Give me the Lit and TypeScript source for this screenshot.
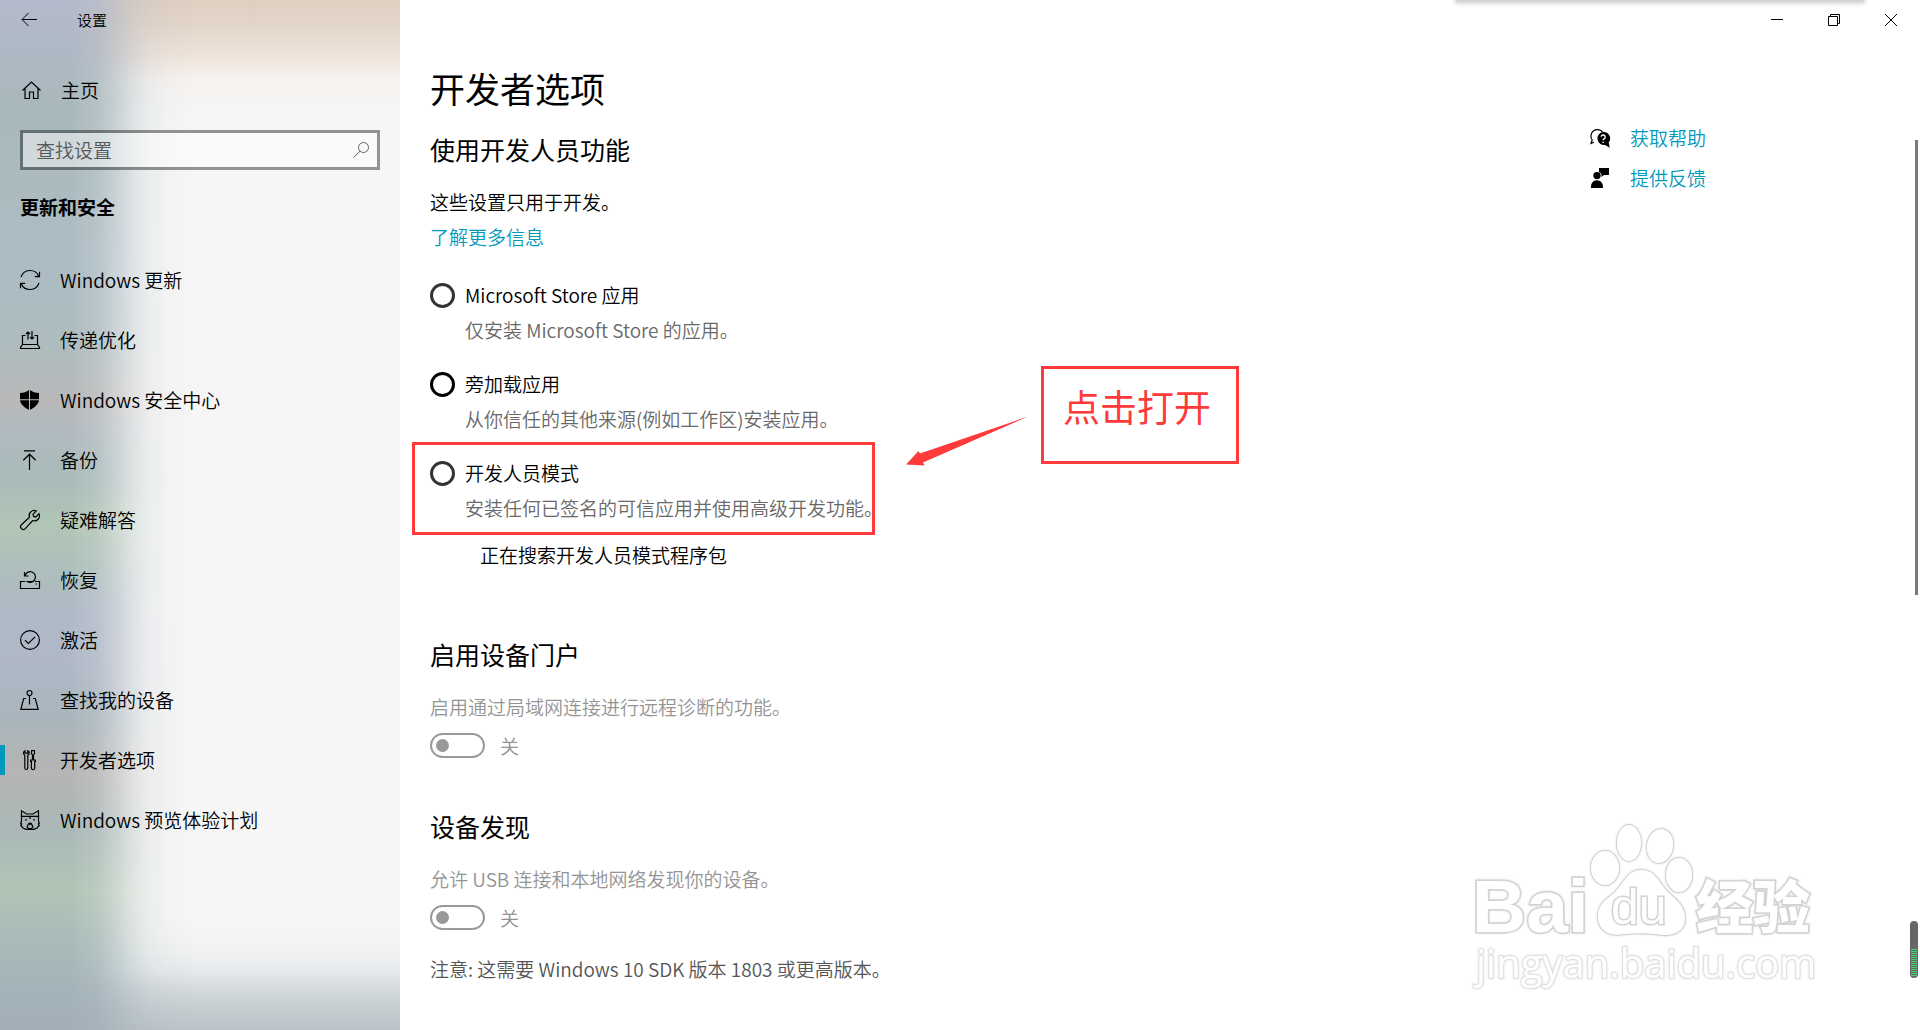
import { LitElement, html, svg, css, nothing } from "lit";
import { customElement, property, state } from "lit/decorators.js";
import { classMap } from "lit/directives/class-map.js";

const icons: Record<string, unknown> = {
  back: svg`<path d="M17 9.500H2M8.500 3 2 9.500l6.500 6.500"/>`,
  home: svg`<path d="M1.500 10.500 10.500 2l9 8.500M4 8.500V18.500h4.500v-6.500h4v6.500h4.500V8.500"/>`,
  search: svg`<circle cx="11.500" cy="7.500" r="5"/><path d="M8 11.200 1.500 17.500"/>`,
  sync: svg`<path d="M1 7.200A9.400 9.400 0 0 1 18.700 6.300M19.500 1.800V6.600H14.800M19 12.800A9.400 9.400 0 0 1 1.300 13.700M.5 18.200V13.400H5.200"/>`,
  delivery: svg`<path d="M5.500 5.500H2.500V14.500M14.500 5.500H17.500V14.500M2.500 14.500h15l2 3v1H.5v-1zM8 9.500V2M6 4l2-2 2 2M12 1v8M10 7l2 2 2-2"/>`,
  shield: svg`<path class="fill" d="M9 0V9.200H0V3C3.500 3 6.500 2 9 0ZM10 0c2.500 2 5.500 3 9 3V9.200H10ZM0 10.300H9V19.800C4.500 17.800.6 14.500 0 10.300ZM10 10.300h9c-.6 4.200-4.500 7.500-9 9.500Z"/>`,
  backup: svg`<path d="M4 .8H15M9.500 20V4.500M3.300 10.300 9.500 4.200l6.200 6.100"/>`,
  wrench: svg`<path d="M16.300 1A5 5 0 0 0 9.500 7.300L1.400 14.700a2.700 2.700 0 0 0 3.900 3.900L12.700 10.500A5 5 0 0 0 19 3.700L15.800 7 13.600 6.400 13 4.300Z"/>`,
  recovery: svg`<path d="M5 11.500H.5v7h19v-7H15M4.500 2v4H8.500M5 5.800A5.300 5.300 0 1 1 7.300 11.500H13M15.500 14h1.500"/>`,
  check: svg`<circle cx="10" cy="10" r="9.400"/><path d="m5 10.200 3.400 3.300 6.700-6.700"/>`,
  locate: svg`<circle cx="9.500" cy="3" r="2.500"/><path d="M9.500 5.500V14.500M6 8.500H3.700L.8 19.400H18.200L15.300 8.500H13"/>`,
  tools: svg`<path d="M5 .7A2.500 2.500 0 0 0 4.800 5.200V18a1.500 1.500 0 0 0 3 0V5.200A2.500 2.500 0 0 0 7.800.7V3.200H5ZM11.500.6h3V3.500l-1 1.500V10h-1V5l-1-1.500ZM10.600 10h4.800v1.500h-.7V18a1.600 1.600 0 0 1-3.300 0v-6.500h-.8Z"/>`,
  insider: svg`<path d="M1.500 6V.8L6.500 4h6.500l5.500-3.200V6M.8 6.300H19.200M1.500 6V11L.7 13l1 1-1 1.500 2.300 2.500 3 1.400h8l3-1.400 2.300-2.500-1-1.500 1-1L18.500 11V6M10 6.500V9M7 17l1.500-3 1.500-1 1.500 1L13 17l-1.500 1.500h-3ZM6 8.800v2M14 8.800v2"/><path class="fill" d="M8 13h4l-2 2.500Z"/>`,
  help: svg`<path d="M4 14.200 1 15.500 2.200 12A6.500 6.500 0 1 1 12.700 4.200"/><path class="fill" d="M13 4A6.500 6.500 0 0 1 18.700 14.500L19.800 19.800 15 17A6.500 6.500 0 1 1 13 4Z"/><path class="cut" d="M11.200 8.800a2 2 0 1 1 2.800 2c-.7.400-.9.700-.9 1.500M13.100 13.700v1.300"/>`,
  feedback: svg`<path class="fill" d="M9 0H19V7H14L11.500 9V6.500A4.200 4.200 0 0 0 9 4ZM7 3.900a3.700 3.700 0 1 1 0 7.400 3.700 3.700 0 0 1 0-7.400ZM1 20C.7 15.500 3 12.300 7 12.300s6.300 3.200 6 7.700Z"/>`,
  minimize: svg`<path d="M4 9.500H16"/>`,
  restore: svg`<path d="M4.500 6.500h9v9h-9zM6.500 6.500v-2h9v9h-2"/>`,
  close: svg`<path d="m4 4 12 12M16 4 4 16"/>`,
};

@customElement("ui-icon")
export class UiIcon extends LitElement {
  @property() name = "";
  @property({ type: Boolean, reflect: true }) thin = false;

  static styles = css`
    :host { display: block; flex: none; width: 20px; height: 20px; }
    svg { display: block; width: 20px; height: 20px; overflow: visible; fill: none; stroke: currentColor; stroke-width: 1.200; }
    :host([thin]) svg { stroke-width: 1; }
    .fill { fill: currentColor; stroke: none; }
    .cut { stroke: #fff; stroke-width: 1.400; }
  `;

  render() {
    return html`<svg viewBox="0 0 20 20" aria-hidden="true">${icons[this.name] ?? nothing}</svg>`;
  }
}

@customElement("toggle-switch")
export class ToggleSwitch extends LitElement {
  @property() label = "";

  static styles = css`
    :host { display: block; }
    .row { display: flex; align-items: center; gap: 15px; height: 25px; color: #949494; }
    .switch { appearance: none; display: flex; align-items: center; box-sizing: border-box; width: 55px; height: 25px; margin: 0; padding: 0 4px; border: 2px solid #999; border-radius: 13px; }
    .switch::before { content: ""; width: 13px; height: 13px; border-radius: 50%; background: #999; }
  `;

  render() {
    return html`<label class="row"><input class="switch" type="checkbox" role="switch" aria-label=${this.label} disabled />关</label>`;
  }
}

@customElement("site-watermark")
export class SiteWatermark extends LitElement {
  static styles = css`
    :host { display: block; width: 360px; height: 180px; pointer-events: none; }
    svg { display: block; overflow: visible; fill: #fff; stroke: #d2d2d2; stroke-width: 2; paint-order: stroke; filter: drop-shadow(0 0 1px #ddd); }
    .brand { font: 700 75px "Liberation Sans", Arial, sans-serif; stroke-width: 3; }
    .du { font: 400 50px "Liberation Sans", Arial, sans-serif; stroke-width: 3; }
    .cjk { font: 900 57px "Noto Sans CJK SC", sans-serif; stroke-width: 3; }
    .site { font: 400 40px "Open Sans", sans-serif; stroke: #e0e0e0; }
  `;

  render() {
    return html`<svg width="360" height="180" viewBox="0 0 360 180">
      <text class="brand" x="-3" y="107">Bai</text>
      <ellipse cx="130" cy="43" rx="14" ry="17"/>
      <ellipse cx="154" cy="18" rx="12" ry="18"/>
      <ellipse cx="185" cy="21" rx="13" ry="17" transform="rotate(10 185 21)"/>
      <ellipse cx="204" cy="50" rx="13" ry="17"/>
      <path d="M166 45C179 45 183 55 190 64C198 73 210 79 210 93C210 106 199 111 188 110C175 108 161 108 149 109C133 112 123 105 123 91C123 78 133 74 141 66C149 57 153 45 166 45Z"/>
      <text class="du" x="136" y="99">du</text>
      <text class="cjk" x="221" y="103">经验</text>
      <text class="site" x="1" y="153">jingyan.baidu.com</text>
    </svg>`;
  }
}

interface NavItem { icon: string; text: string; current?: boolean }
interface Option { id: string; text: string; hint: string }

@customElement("app-root")
export class AppRoot extends LitElement {
  @state() private selected = "";

  private nav: NavItem[] = [
    { icon: "sync", text: "Windows 更新" },
    { icon: "delivery", text: "传递优化" },
    { icon: "shield", text: "Windows 安全中心" },
    { icon: "backup", text: "备份" },
    { icon: "wrench", text: "疑难解答" },
    { icon: "recovery", text: "恢复" },
    { icon: "check", text: "激活" },
    { icon: "locate", text: "查找我的设备" },
    { icon: "tools", text: "开发者选项", current: true },
    { icon: "insider", text: "Windows 预览体验计划" },
  ];

  private options: Option[] = [
    { id: "store", text: "Microsoft Store 应用", hint: "仅安装 Microsoft Store 的应用。" },
    { id: "sideload", text: "旁加载应用", hint: "从你信任的其他来源(例如工作区)安装应用。" },
    { id: "developer", text: "开发人员模式", hint: "安装任何已签名的可信应用并使用高级开发功能。" },
  ];

  static styles = css`
    :host {
      display: grid; grid-template-columns: 400px 1fr; position: relative; min-height: 100vh; overflow: hidden;
      background: #fff; color: #000; font: 350 19px/24px "Noto Sans CJK SC", "Noto Sans", sans-serif;
    }
    a { color: #0099bc; text-decoration: none; }
    h1, h2, p, ul, fieldset { margin: 0; padding: 0; border: 0; font-weight: inherit; }
    button { padding: 0; border: 0; background: none; color: inherit; font: inherit; }

    .sidebar { position: relative; background: #f6f6f6; }
    .sidebar::before, .sidebar::after { content: ""; position: absolute; inset: 0; }
    .sidebar::before {
      background:
        linear-gradient(to bottom, #dfcfc1 0, #e3d5c9 24px, #eee3da 55px, rgba(246, 242, 238, 0.8) 80px, transparent 110px),
        linear-gradient(to top, #bbc4c8 0, #c5cdd0 20px, #d5dadd 42px, #e7eaec 60px, #f1f2f2 80px, transparent 110px);
    }
    .sidebar::after {
      background:
        linear-gradient(to bottom, #b4bacb 0, #afb8c5 45px, #a9b8bd 100px, #abbbc0 200px, #adbcc4 270px, #adbcbf 340px, #b9b8b9 400px, #b1babf 430px, #a8bbba 480px, #b1c6b6 525px, #adc0ba 560px, #afb9c6 610px, #b0b8c7 660px, #a9b5bc 720px, #b5b5b4 770px, #aab8b7 830px, #b0c5b6 890px, #a9bbb9 940px, #a3b1b9 1000px, #a3afb8 1030px);
      mask-image: linear-gradient(to right, #000 70px, rgba(0, 0, 0, 0.850) 98px, rgba(0, 0, 0, 0.600) 116px, rgba(0, 0, 0, 0.340) 132px, rgba(0, 0, 0, 0.150) 148px, rgba(0, 0, 0, 0.050) 168px, transparent 195px);
    }
    .panel { position: relative; z-index: 1; display: flex; flex-direction: column; }
    .title-row { display: flex; align-items: center; gap: 37px; height: 40px; padding-left: 20px; font-size: 15px; }
    .back { display: block; }
    .home { display: flex; align-items: center; gap: 20px; height: 60px; margin-top: 20px; padding-left: 21px; color: inherit; }
    .search { display: flex; align-items: center; box-sizing: border-box; height: 40px; margin: 10px 20px 0; padding: 0 5px 0 13px; border: 3px solid rgba(0, 0, 0, 0.400); background: rgba(255, 255, 255, 0.450); background-clip: padding-box; color: #666; }
    .search-box { flex: 1; min-width: 0; padding: 0; border: 0; outline: 0; background: none; color: #000; font: inherit; }
    .search-box::placeholder { color: #555759; opacity: 1; }
    .group { margin-top: 25px; padding-left: 20px; font-size: 19px; font-weight: 700; line-height: 24px; }
    .nav { margin-top: 31px; list-style: none; }
    .nav-link { position: relative; display: flex; align-items: center; gap: 20px; height: 60px; padding-left: 20px; color: inherit; }
    .nav-link.current::before { content: ""; position: absolute; left: 0; top: 15px; width: 5px; height: 30px; background: #0099bc; }

    .main { display: grid; grid-template-columns: minmax(0, 1fr) 330px; align-items: start; padding: 66px 0 40px 30px; }
    .page-title { font-size: 35px; line-height: 44px; font-weight: 400; }
    .section-title { font-size: 25px; line-height: 32px; font-weight: 400; }
    .content { display: flex; flex-direction: column; align-items: flex-start; }
    .intro { margin-top: 23px; }
    .lead { margin-top: 25px; }
    .more { margin-top: 11px; }
    .options { display: grid; gap: 30px; margin-top: 34px; }
    .option { position: relative; display: grid; gap: 11px; }
    .choice { display: flex; align-items: center; gap: 10px; height: 24px; }
    .radio { appearance: none; box-sizing: border-box; width: 25px; height: 25px; margin: 0; border: 3px solid #333; border-radius: 50%; }
    .radio.strong { border-color: #000; }
    .radio:checked { background: radial-gradient(circle, #000 5px, transparent 6px); }
    .hint { padding-left: 35px; color: #696969; }
    .progress { margin: 23px 0 0 50px; }
    .portal { margin-top: 71px; }
    .discovery { margin-top: 52px; }
    .muted { margin-top: 25px; color: #949494; }
    .toggle { margin-top: 14px; }
    .note { margin-top: 27px; color: #555; }

    .support { display: grid; gap: 16px; padding-top: 60px; }
    .support-row { display: flex; align-items: center; gap: 20px; }
    .support-row ui-icon { color: #000; }

    .window-controls { position: absolute; top: 0; right: 1px; display: flex; gap: 1px; }
    .window-button { display: grid; place-items: center; width: 56px; height: 40px; }
    .top-shade { position: absolute; top: -6px; right: 56px; width: 408px; height: 8px; background: #d5d5d5; box-shadow: 0 0 5px 1px #c8c8c8; }
    .scroll-thumb { position: absolute; top: 140px; right: 2px; width: 3px; height: 455px; background: #7a7a7a; }
    .meter { position: absolute; right: 2px; bottom: 52px; width: 8px; height: 57px; border-radius: 4px; background: repeating-linear-gradient(to bottom, #4bd07a 0 1px, #666 1px 2px) center 28px / 6px 28px no-repeat #666; }
    .watermark { position: absolute; right: 85px; bottom: 25px; }

    .frame { position: absolute; left: -18px; top: -19px; box-sizing: border-box; width: 463px; height: 93px; border: 3px solid #ff3a3a; pointer-events: none; }
    .arrow { position: absolute; left: 476px; top: -45px; width: 122px; height: 50px; overflow: visible; fill: #ff3a3a; }
    .callout { position: absolute; left: 611px; top: -95px; display: flex; justify-content: center; box-sizing: border-box; width: 198px; height: 98px; padding: 13px 6px 0 0; border: 3px solid #ff3a3a; color: #ff3a3a; font-size: 37px; font-weight: 400; line-height: 48px; white-space: nowrap; }
  `;

  private renderOption(option: Option) {
    return html`
      <div class="option">
        <label class="choice">
          <input class=${classMap({ radio: true, strong: option.id === "sideload" })} type="radio" name="mode"
            aria-describedby=${`${option.id}-hint`} .checked=${this.selected === option.id}
            @change=${() => (this.selected = option.id)} />
          <span>${option.text}</span>
        </label>
        <p class="hint" id=${`${option.id}-hint`}>${option.hint}</p>
        ${option.id === "developer"
          ? html`<div class="frame"></div>
              <svg class="arrow" viewBox="0 0 122 50" aria-hidden="true"><path d="M122 .5 14 37.500 12.500 35 0 48.500 18.500 49.500 17 46.500Z"/></svg>
              <div class="callout">点击打开</div>`
          : nothing}
      </div>`;
  }

  render() {
    return html`
      <aside class="sidebar">
        <div class="panel">
          <div class="title-row">
            <button class="back" aria-label="返回"><ui-icon name="back" thin></ui-icon></button>
            <span>设置</span>
          </div>
          <a class="home" href="#home"><ui-icon name="home"></ui-icon>主页</a>
          <label class="search">
            <input class="search-box" type="text" placeholder="查找设置" aria-label="查找设置" />
            <ui-icon name="search" thin></ui-icon>
          </label>
          <h2 class="group">更新和安全</h2>
          <ul class="nav">
            ${this.nav.map((item) => html`<li>
              <a class=${classMap({ "nav-link": true, current: !!item.current })} href="#${item.icon}"
                aria-current=${item.current ? "page" : nothing}><ui-icon name=${item.icon}></ui-icon>${item.text}</a>
            </li>`)}
          </ul>
        </div>
      </aside>

      <main class="main">
        <div class="content">
          <h1 class="page-title">开发者选项</h1>
          <h2 class="section-title intro">使用开发人员功能</h2>
          <p class="lead">这些设置只用于开发。</p>
          <a class="more" href="#more">了解更多信息</a>
          <fieldset class="options" aria-label="使用开发人员功能">
            ${this.options.map((option) => this.renderOption(option))}
          </fieldset>
          <p class="progress">正在搜索开发人员模式程序包</p>

          <h2 class="section-title portal">启用设备门户</h2>
          <p class="muted">启用通过局域网连接进行远程诊断的功能。</p>
          <toggle-switch class="toggle" label="启用设备门户"></toggle-switch>

          <h2 class="section-title discovery">设备发现</h2>
          <p class="muted">允许 USB 连接和本地网络发现你的设备。</p>
          <toggle-switch class="toggle" label="设备发现"></toggle-switch>
          <p class="note">注意: 这需要 Windows 10 SDK 版本 1803 或更高版本。</p>
        </div>
        <nav class="support">
          <a class="support-row" href="#help"><ui-icon name="help"></ui-icon>获取帮助</a>
          <a class="support-row" href="#feedback"><ui-icon name="feedback"></ui-icon>提供反馈</a>
        </nav>
      </main>

      <div class="top-shade"></div>
      <div class="window-controls">
        <button class="window-button" aria-label="最小化"><ui-icon name="minimize" thin></ui-icon></button>
        <button class="window-button" aria-label="还原"><ui-icon name="restore" thin></ui-icon></button>
        <button class="window-button" aria-label="关闭"><ui-icon name="close" thin></ui-icon></button>
      </div>
      <div class="scroll-thumb"></div>
      <div class="meter"></div>
      <site-watermark class="watermark"></site-watermark>
    `;
  }
}
